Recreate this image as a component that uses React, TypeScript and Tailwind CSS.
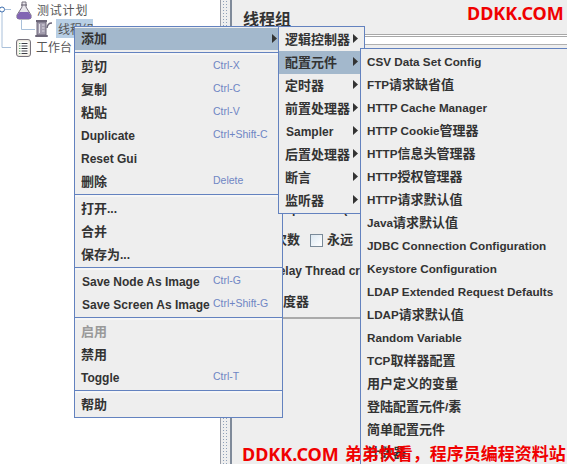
const sans = "font-['Liberation_Sans','Noto_Sans_CJK_SC',sans-serif]";

type Row = { t?: string; k?: string; sep?: boolean; first?: boolean; sel?: boolean; off?: boolean; arrow?: boolean; cls?: string };

const mainRows: Row[] = [
  { t: "添加", sel: true, arrow: true, first: true },
  { sep: true, first: true },
  { t: "剪切", k: "Ctrl-X" },
  { t: "复制", k: "Ctrl-C" },
  { t: "粘贴", k: "Ctrl-V" },
  { t: "Duplicate", k: "Ctrl+Shift-C" },
  { t: "Reset Gui" },
  { t: "删除", k: "Delete" },
  { sep: true },
  { t: "打开..." },
  { t: "合并" },
  { t: "保存为..." },
  { sep: true },
  { t: "Save Node As Image", k: "Ctrl-G", cls: "pl-[1px]" },
  { t: "Save Screen As Image", k: "Ctrl+Shift-G", cls: "pl-[1px]" },
  { sep: true },
  { t: "启用", off: true },
  { t: "禁用" },
  { t: "Toggle", k: "Ctrl-T" },
  { sep: true },
  { t: "帮助" },
];

const sub1: Row[] = [
  { t: "逻辑控制器" },
  { t: "配置元件", sel: true },
  { t: "定时器" },
  { t: "前置处理器" },
  { t: "Sampler", cls: "pl-[1px]" },
  { t: "后置处理器" },
  { t: "断言" },
  { t: "监听器" },
];

const sub2 = [
  "CSV Data Set Config",
  "FTP请求缺省值",
  "HTTP Cache Manager",
  "HTTP Cookie 管理器",
  "HTTP信息头管理器",
  "HTTP授权管理器",
  "HTTP请求默认值",
  "Java请求默认值",
  "JDBC Connection Configuration",
  "Keystore Configuration",
  "LDAP Extended Request Defaults",
  "LDAP请求默认值",
  "Random Variable",
  "TCP取样器配置",
  "用户定义的变量",
  "登陆配置元件/素",
  "简单配置元件",
  "计数器",
];

function Mixed({ text, large }: { text: string; large?: boolean }) {
  return (
    <>
      {text.split(/([\u2E80-\u9FFF\uFF00-\uFFEF]+)/).map((part, i) =>
        part === "" ? null : (
          <span key={i} className={i % 2 === 1 ? "text-[13px]" : large ? "text-[12px]" : "text-[11.7px]"}>
            {part}
          </span>
        )
      )}
    </>
  );
}

function Arrow() {
  return (
    <svg width="5" height="9" viewBox="0 0 5 9" className="shrink-0">
      <path d="M0 0 L5 4.5 L0 9 Z" fill="#333333" />
    </svg>
  );
}

function Separator({ first }: { first?: boolean }) {
  return (
    <div className={`flex flex-col ${first ? "h-[5px] pt-[2px]" : "h-[4px] pt-[1px]"}`}>
      <div className="h-[1px] bg-[#6382bf]" />
      <div className="h-[2px] bg-[#f6f6f6]" />
    </div>
  );
}

function FlaskIcon() {
  return (
    <svg width="16" height="19" viewBox="0 0 16 19" className="shrink-0">
      <path d="M6 1 H10 V6 L15 14 Q16 18 13 18 H3 Q0 18 1 14 L6 6 Z" fill="#e8e6ec" stroke="#77707f" strokeWidth="1" />
      <path d="M3.5 11 H12.5 L15 14.5 Q15.5 18 13 18 H3 Q0.5 18 1 14.5 Z" fill="#8265b3" />
      <path d="M5 4 H11" stroke="#5f5868" strokeWidth="1" />
    </svg>
  );
}

function SpoolIcon() {
  return (
    <svg width="18" height="19" viewBox="0 0 18 19" className="shrink-0">
      <rect x="0" y="16" width="13" height="2" rx="1" fill="#6d6678" />
      <rect x="1" y="1" width="11" height="2" fill="#6d6678" />
      <rect x="2" y="3" width="9" height="13" fill="#a39dae" stroke="#6d6678" />
      <path d="M4.5 5 V14" stroke="#e6e4ea" />
      <path d="M7 6 H9.5 M7 9 H9.5 M7 12 H9.5" stroke="#dcd9e2" />
      <path d="M12 9 Q12.5 4 17 4" fill="none" stroke="#6d6678" strokeWidth="1.5" />
    </svg>
  );
}

function ClipboardIcon() {
  return (
    <svg width="15" height="18" viewBox="0 0 15 18" className="shrink-0">
      <rect x="0.5" y="0.5" width="14" height="17" rx="2.5" fill="#efe9df" stroke="#77737d" />
      <rect x="2.5" y="2.5" width="10" height="13" fill="#ffffff" />
      <path d="M5.5 4.5 H11.5 M5.5 7 H11.5 M5.5 9.5 H11.5 M5.5 12 H11.5 M5.5 14.5 H11.5" stroke="#3e3e46" />
      <path d="M3 4.5 H4.5 M3 7 H4.5 M3 9.5 H4.5 M3 12 H4.5 M3 14.5 H4.5" stroke="#5d9d63" />
    </svg>
  );
}

function Tree() {
  return (
    <div className="relative w-[220px] shrink-0 bg-white font-['Noto_Sans_CJK_SC',sans-serif] text-[12px] text-[#555]">
      <svg width="40" height="50" viewBox="0 0 40 50" className="absolute left-0 top-0">
        <path d="M2 12 V47.5 H11 M5 9.5 H11 M21.5 20 V29.5 H35" fill="none" stroke="#a9c0da" />
        <circle cx="2" cy="9.5" r="2.5" fill="#fff" stroke="#3f6fae" />
      </svg>
      <div className="absolute left-[16px] top-[1px] flex h-[19px] items-center gap-[5px]">
        <FlaskIcon />
        <span className="pb-[2px] tracking-[0.8px]">测试计划</span>
      </div>
      <div className="absolute left-[35px] top-[19px] flex h-[19px] items-center gap-[3px]">
        <SpoolIcon />
        <span className="w-[37px] overflow-hidden whitespace-nowrap bg-[#b8cfe5] px-[2px] leading-[19px]">线程组</span>
      </div>
      <div className="absolute left-[16px] top-[38px] flex h-[19px] items-center gap-[5px]">
        <ClipboardIcon />
        <span className="pb-[2px] leading-[17px]">工作台</span>
      </div>
    </div>
  );
}

function Divider() {
  return (
    <div className="flex w-[12px] shrink-0 bg-[#eeeeee]">
      <div className="w-[1px] bg-[#9a9ea8]" />
      <div className="mx-[2px] flex-1 [background-image:radial-gradient(#8fa0b8_0.6px,transparent_0.7px)] [background-position:2px_0] [background-size:3px_3px]" />
      <div className="ml-auto w-[2px] bg-[#7f8a99]" />
    </div>
  );
}

function Right() {
  return (
    <div className={`flex-1 bg-[#eeeeee] text-[#333] ${sans}`}>
      <div className="h-[34px] pl-[11px] pt-[11px] text-[16px] font-bold leading-[18px]">线程组</div>
      <div className="h-[3px] border-y border-[#a8a8a8] bg-white" />
      <div className="h-[8px] border-b border-[#b0b0b0] bg-white" />
      <div className="mt-[155px] h-[18px] whitespace-nowrap pl-[14px] text-[12px] font-bold leading-[18px]">Ramp-Up Period (in seconds):</div>
      <div className="mt-[11px] flex h-[22px] items-center whitespace-nowrap pl-[16px] text-[13px] font-bold">
        <span className="w-[52px]">循环次数</span>
        <span className="ml-[10px] h-[13px] w-[13px] border border-[#7a8a99] bg-[linear-gradient(135deg,#dce8f2,#ffffff)]" />
        <span className="ml-[4px]">永远</span>
      </div>
      <div className="mt-[11px] h-[18px] whitespace-nowrap pl-[38px] text-[12px] font-bold leading-[18px]">Delay Thread creation until needed</div>
      <div className="mt-[13px] h-[18px] pl-[38px] text-[13px] font-bold leading-[18px]">调度器</div>
      <div className="mt-[6px] h-[2px] bg-[#aaaaaa]" />
    </div>
  );
}

function Menu({ rows, className }: { rows: Row[]; className: string }) {
  return (
    <div className={`absolute border border-[#6382bf] bg-[#eeeeee] ${sans} ${className}`}>
      {rows.map((r, i) =>
        r.sep ? (
          <Separator key={i} first={r.first} />
        ) : (
          <div
            key={i}
            className={`flex items-center whitespace-nowrap pb-[2px] pl-[6px] font-bold ${r.first ? "h-[22px]" : "h-[23px]"} ${
              r.sel ? "bg-[#a3b8cc]" : ""
            } ${r.off ? "text-[#999999]" : "text-[#333333]"}`}
          >
            <span className={`w-[132px] shrink-0 ${r.cls ?? ""}`}>
              <Mixed text={r.t ?? ""} large />
            </span>
            {r.k && <span className="text-[10.5px] font-normal text-[#6f86c4]">{r.k}</span>}
            {r.arrow && (
              <span className="ml-auto pr-[5px]">
                <Arrow />
              </span>
            )}
          </div>
        )
      )}
    </div>
  );
}

function Sub1() {
  return (
    <div className={`absolute left-[278px] top-[26px] w-[87px] border border-[#6382bf] bg-[#eeeeee] py-[1px] ${sans}`}>
      {sub1.map((r, i) => (
        <div
          key={i}
          className={`flex h-[23px] items-center whitespace-nowrap pb-[2px] pl-[6px] pr-[6px] font-bold text-[#333333] ${
            r.sel ? "bg-[#a3b8cc]" : ""
          }`}
        >
          <span className={r.cls}>
            <Mixed text={r.t ?? ""} large />
          </span>
          <span className="ml-auto">
            <Arrow />
          </span>
        </div>
      ))}
    </div>
  );
}

function Sub2() {
  return (
    <div className={`absolute bottom-0 left-[360px] right-0 top-[48px] overflow-hidden border-l border-t border-[#6382bf] bg-[#eeeeee] pt-[1px] ${sans}`}>
      {sub2.map((t) => (
        <div key={t} className="flex h-[23px] items-center whitespace-nowrap pl-[6px] font-bold text-[#333333]">
          <Mixed text={t} />
        </div>
      ))}
    </div>
  );
}

export default function App() {
  return (
    <div lang="zh-CN" className="relative flex h-[464px] w-[567px] overflow-hidden bg-[#eeeeee]">
      <Tree />
      <Divider />
      <Right />
      <Menu rows={mainRows} className="left-[74px] top-[26px] w-[209px] py-[1px]" />
      <Sub1 />
      <Sub2 />
      <div className="absolute left-[467px] top-[1px] font-['Noto_Sans','Noto_Sans_CJK_SC',sans-serif] text-[18px] font-bold leading-[24px] text-[#f00000]">
        DDKK.COM
      </div>
      <div className="absolute left-[242px] top-[442px] flex items-center gap-[6px] whitespace-nowrap font-['Noto_Sans','Noto_Sans_CJK_SC',sans-serif] font-bold leading-[24px] text-[#f00000]">
        <span className="text-[18px]">DDKK.COM</span>
        <span className="text-[17px]">弟弟快看，程序员编程资料站</span>
      </div>
    </div>
  );
}
